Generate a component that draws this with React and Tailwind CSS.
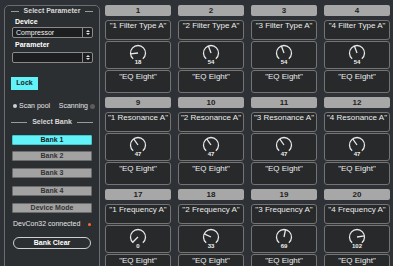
import React from 'react';

const rows = [
  { nums: [1, 2, 3, 4], label: 'Filter Type A', values: [18, 54, 54, 54] },
  { nums: [9, 10, 11, 12], label: 'Resonance A', values: [47, 47, 47, 47] },
  { nums: [17, 18, 19, 20], label: 'Frequency A', values: [0, 33, 69, 102] },
];

const Knob = ({ value }) => {
  const r = 7.5;
  const a = ((-135 + (270 * value) / 127) * Math.PI) / 180;
  const g = (140 * Math.PI) / 180;
  const sx = 10 - r * Math.sin(g);
  const sy = 10 - r * Math.cos(g);
  const ex = 10 + r * Math.sin(g);
  return (
    <div className="flex flex-col items-center">
      <svg width="20" height="20" viewBox="0 0 20 20" className="mt-[1px]">
        <path
          d={`M ${sx} ${sy} A ${r} ${r} 0 1 1 ${ex} ${sy}`}
          fill="none"
          stroke="#e8e8e8"
          strokeWidth="1.3"
        />
        <line
          x1="10"
          y1="10"
          x2={10 + r * Math.sin(a)}
          y2={10 - r * Math.cos(a)}
          stroke="#e8e8e8"
          strokeWidth="1.3"
        />
      </svg>
      <div className="mt-[-4px] h-[6px] text-[6px] leading-[6px] font-bold text-[#f0f0f0]">{value}</div>
    </div>
  );
};

const Heading = ({ children, className }) => (
  <div className={`flex items-center gap-[5px] px-[6px] h-[10px] ${className}`}>
    <div className="flex-1 h-px bg-[#9a9a9a]" />
    <span className="text-[7px] leading-[10px] font-bold text-[#d8d8d8]">{children}</span>
    <div className="flex-1 h-px bg-[#9a9a9a]" />
  </div>
);

const Dropdown = ({ text, className }) => (
  <div className={`ml-[7px] mr-[6px] h-[11px] flex border border-[#8a8a8a] rounded-[2px] bg-[#1d1e20] ${className}`}>
    <div className="flex-1 pl-[3px] text-[7px] leading-[9px] text-[#f2f2f2]">{text}</div>
    <div className="w-[10px] border-l border-[#8a8a8a] flex flex-col items-center justify-center gap-[1px]">
      <div className="w-0 h-0 border-l-[2px] border-r-[2px] border-b-[2px] border-l-transparent border-r-transparent border-b-[#e0e0e0]" />
      <div className="w-0 h-0 border-l-[2px] border-r-[2px] border-t-[2px] border-l-transparent border-r-transparent border-t-[#e0e0e0]" />
    </div>
  </div>
);

const BankButton = ({ children, active, className }) => (
  <div
    className={`ml-[7px] w-[80px] h-[10px] flex items-center justify-center text-[7px] font-bold rounded-[1px] border ${
      active ? 'bg-[#62f3f8] border-[#3fc9cf] text-[#1c1c1c]' : 'bg-[#a2a2a2] border-[#6c6c6c] text-[#333]'
    } ${className}`}
  >
    {children}
  </div>
);

const Cell = ({ num, name, value }) => (
  <div className="flex flex-col">
    <div className="h-[11px] rounded-[2px] bg-[#a7a7a7] text-center text-[8px] leading-[11px] font-bold text-[#1e1e1e]">
      {num}
    </div>
    <div className="mt-[4px] h-[20px] border border-[#747474] rounded-[3px] bg-[#27292b] text-center text-[8px] leading-[9px] text-[#ececec] whitespace-nowrap">
      "{name}"
    </div>
    <div className="mt-[1px] h-[28px] border border-[#747474] rounded-[3px] bg-[#27292b]">
      <Knob value={value} />
    </div>
    <div className="mt-[1px] h-[23px] border border-[#747474] rounded-[3px] bg-[#27292b] text-center text-[8px] leading-[10px] pt-[1px] text-[#ececec]">
      "EQ Eight"
    </div>
  </div>
);

export default function App() {
  return (
    <div className="w-[393px] h-[266px] overflow-hidden bg-[#2e3135] flex font-['Liberation_Sans',Arial,sans-serif]">
      <div className="ml-[4px] mt-[5px] w-[96px] h-[270px] border border-[#6a6d71] rounded-t-[5px] bg-[#2c2f32] flex flex-col">
        <Heading>Select Parameter</Heading>
        <div className="mt-[1px] pl-[10px] h-[9px] text-[7px] leading-[9px] font-bold text-white">Device</div>
        <Dropdown text="Compressor" className="mt-[1px]" />
        <div className="mt-[2px] pl-[10px] h-[9px] text-[7px] leading-[9px] font-bold text-white">Parameter</div>
        <Dropdown text="" className="mt-[3px]" />
        <div className="mt-[14px] ml-[6px] w-[27px] h-[13px] bg-[#62f3f8] flex items-center justify-center text-[7px] font-bold text-[#1c1c1c]">
          Lock
        </div>
        <div className="mt-[11px] h-[10px] flex items-center pl-[8px] pr-[4px] text-[7px] text-[#e6e6e6]">
          <div className="w-[4px] h-[4px] rounded-full bg-[#d0d0d0]" />
          <span className="ml-[2px]">Scan pool</span>
          <span className="ml-auto">Scanning</span>
          <div className="ml-[2px] w-[5px] h-[5px] rounded-full bg-[#5a5c5e]" />
        </div>
        <Heading className="mt-[6px]">Select Bank</Heading>
        <BankButton active className="mt-[8px]">Bank 1</BankButton>
        <BankButton className="mt-[6px]">Bank 2</BankButton>
        <BankButton className="mt-[7px]">Bank 3</BankButton>
        <BankButton className="mt-[8px]">Bank 4</BankButton>
        <BankButton className="mt-[7px]">Device Mode</BankButton>
        <div className="mt-[6px] h-[10px] flex items-center pl-[8px] text-[7px] text-[#e6e6e6]">
          <span>DevCon32 connected</span>
          <div className="ml-[8px] w-[3px] h-[3px] rounded-full bg-[#ff6a2c]" />
        </div>
        <div className="mt-[8px] ml-[8px] w-[78px] h-[12px] rounded-full border border-[#cfcfcf] flex items-center justify-center text-[7px] font-bold text-white">
          Bank Clear
        </div>
      </div>
      <div className="ml-[5px] mt-[5px] grid grid-cols-[66px_66px_66px_66px] gap-x-[7px] gap-y-[4px] content-start">
        {rows.map((row) =>
          row.nums.map((n, i) => (
            <Cell key={n} num={n} name={`${i + 1} ${row.label}`} value={row.values[i]} />
          ))
        )}
      </div>
    </div>
  );
}
